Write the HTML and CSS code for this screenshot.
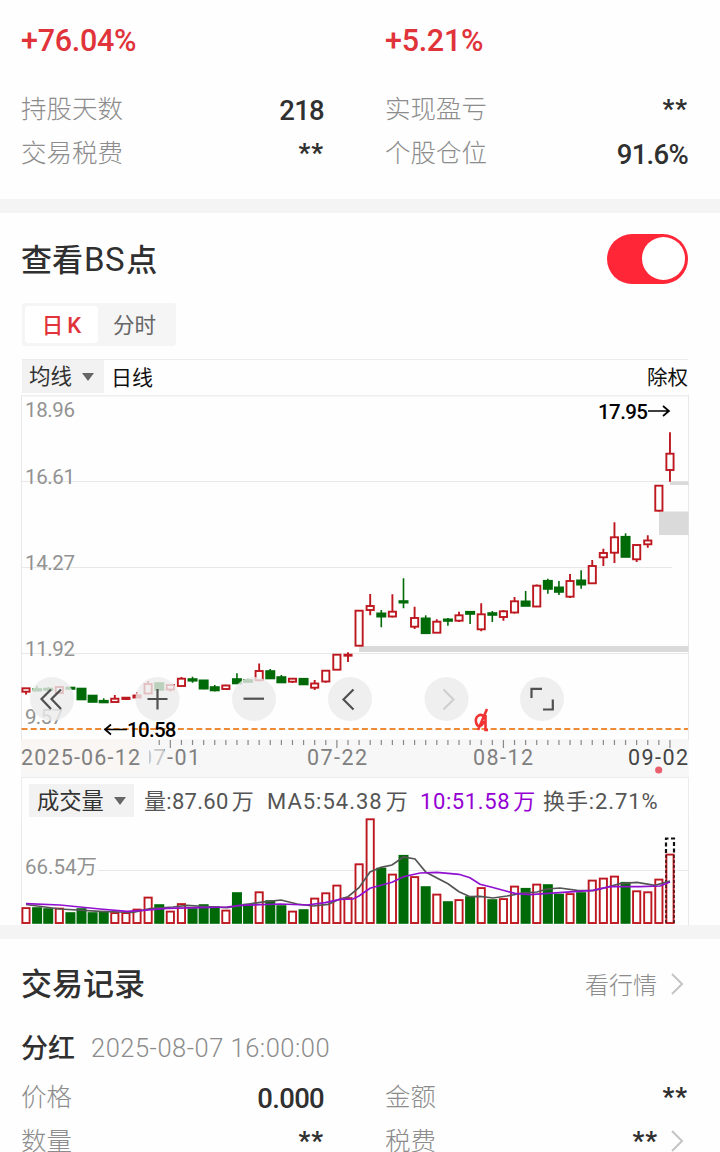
FILE: index.html
```html
<!DOCTYPE html>
<html lang="zh-CN">
  <head>
    <title>交易记录</title>
    <meta charset="utf-8" />
    <link rel="stylesheet" href="styles.css">
  </head>

  <body>
    <section class="summary">
      <div class="rate">+76.04%</div>
      <div class="rate">+5.21%</div>
      <div class="item"><span class="label">持股天数</span><b class="num">218</b></div>
      <div class="item"><span class="label">实现盈亏</span><b class="num stars">**</b></div>
      <div class="item"><span class="label">交易税费</span><b class="num stars">**</b></div>
      <div class="item"><span class="label">个股仓位</span><b class="num">91.6%</b></div>
    </section>

    <section class="chart">
      <div class="chart__head">
        <h2>查看<span>BS</span>点</h2>
        <div class="switch"><i></i></div>
      </div>

      <div class="tabs">
        <span class="tabs__item tabs__item--on">日<em>K</em></span>
        <span class="tabs__item">分时</span>
      </div>

      <div class="bar">
        <span class="select">均线<i class="arrow"></i></span>
        <span class="bar__period">日线</span>
        <span class="bar__right">除权</span>
      </div>

      <svg class="price" width="668" height="382" viewBox="21 395 668 382">
        <rect class="axis-band" x="21" y="739" width="668" height="38" />
        <rect class="axis-first" x="21" y="739" width="119" height="32" />
        <path class="grid" d="M21 395.8H689M22 481.5H688M22 567.5H672M22 653.5H688M21.5 395V740M688.5 395V740" />
        <path class="gap" d="M359 646H688.5V652H359zM659 511.500H688.500V535H659zM670 481.500H688.500V485H670z" />
        <g class="axis">
          <text x="25" y="416.500" textLength="50">18.96</text>
          <text x="25" y="484" textLength="50">16.61</text>
          <text x="25" y="570" textLength="50">14.27</text>
          <text x="25" y="656" textLength="50">11.92</text>
          <text x="25" y="724" textLength="38">9.57</text>
        </g>
        <path class="cost" d="M21.500 729H688" />
        <g id="candles"></g>
        <path id="ticks" class="ticks" />
        <g class="dates">
          <text x="140" y="764.500" textLength="60">07-01</text>
          <rect class="fade" x="140" y="746" width="9" height="22" />
          <rect class="fade fade--half" x="149" y="746" width="15" height="22" />
          <text x="21" y="764.500" textLength="119">2025-06-12</text>
          <text x="307" y="764.500" textLength="60">07-22</text>
          <text x="473" y="764.500" textLength="60">08-12</text>
          <text class="dates__now" x="628" y="764.500" textLength="60">09-02</text>
        </g>
        <circle class="dot" cx="658.700" cy="770" r="3.600" />

        <g class="marks">
          <text x="127" y="737" textLength="49.500">10.58</text>
          <path d="M127 729.500H105M111 724.500L105 729.500L111 734.500" />
          <text x="598" y="418.500" textLength="50">17.95</text>
          <path d="M648 411H669M663 406L669 411L663 416" />
        </g>

        <!-- dividend mark -->
        <path class="dividend" d="M485 717C480 712 475 717 476 722C477 728 482 727 484 721M485.500 715V730H488M487 709L478 730" />

        <g class="tools">
          <circle cx="52" cy="699" r="22" />
          <circle cx="157.500" cy="699" r="22" />
          <circle cx="254" cy="699" r="22" />
          <circle cx="350" cy="699" r="22" />
          <circle cx="446.500" cy="699" r="22" />
          <circle cx="542" cy="699" r="22" />
          <path d="M51 689.500L41.500 699L51 709M61 689.500L51.500 699L61 709" />
          <path d="M147.500 699H167.500M157.500 689V709.500" />
          <path d="M243.500 698.700H264" />
          <path d="M353.500 689.500L343.500 699.500L353.500 709.500" />
          <path class="tools__off" d="M443.500 689.500L453.500 699.500L443.500 709.500" />
          <path d="M531.500 698V688.800H542M543 709.500H552.800V699.500" />
        </g>
      </svg>

      <div class="legend">
        <span class="select select--vol">成交量<i class="arrow"></i></span>
        <span class="legend__vol">量:87.60<s></s>万</span>
        <span class="legend__ma5">MA5:54.38<s></s>万</span>
        <span class="legend__ma10">10:51.58<s></s>万</span>
        <span class="legend__turn">换手:2.71%</span>
      </div>
      <svg class="volume" width="668" height="107" viewBox="21 818 668 107">
        <path class="grid" d="M98 870.500H688" />
        <path class="grid" d="M21.500 818V925M688.500 818V925" />
        <text class="volume__label" x="25" y="873.500" textLength="72">66.54万</text>
        <g id="volumes"></g>
        <path class="est" d="M666 853V838.500H674V853" />
        <path class="est est--thin" d="M666 855V923M674 855V923" />
        <polyline class="ma5" points="26,904.500 60,909 100,911.300 133,912.500 150,908.700 173,907 187,905.300 213,907 227,907.700 240,905.700 260,902.300 281,900 297,904 313,906 328,904.300 340,899 348,896.700 359,887.700 370,872 381,867.300 392,865 403.500,857 415,859 426,872.300 448,883.700 459,891.700 470,896.700 480,896.300 493,898 507,896 523,893 537,892 547,889 560,888 577,890.300 593,890.700 607,887.300 620,883.700 637,882.300 655,885.300 670,881" />
        <polyline class="ma10" points="26,903.700 60,905 100,909 127,911.300 143,910.300 167,908.300 200,907.700 227,907 240,905.300 280,904 307,905 325,902.700 340,899.300 353,899 359,896 370,888.300 392,882.300 403.500,876.700 420,873 437,872.300 459,874.300 470,877.700 480,884.300 492,887.300 504,890.500 515,893.300 530,894.700 563,892.300 593,890.300 610,886.700 640,886.700 660,886 670,882" />
      </svg>
    </section>

    <section class="records">
      <div class="records__head">
        <h2>交易记录</h2>
        <span class="more">看行情<svg width="14" height="24" viewBox="0 0 14 24"><path d="M2 2L12 12L2 22" /></svg></span>
      </div>
      <div class="records__title"><b>分红</b><span>2025-08-07 16:00:00</span></div>
      <div class="records__grid">
        <div class="item"><span class="label">价格</span><b class="num">0.000</b></div>
        <div class="item"><span class="label">金额</span><b class="num stars">**</b></div>
        <div class="item"><span class="label">数量</span><b class="num stars">**</b></div>
        <div class="item"><span class="label">税费</span><b class="num stars stars--more">**</b><svg class="chevron" width="14" height="24" viewBox="0 0 14 24"><path d="M2 2L12 12L2 22" /></svg></div>
      </div>
    </section>

    <script>
      // up/down, body top, body bottom, high, low, top of the volume bar
      const days = [
        ["r", 688.3, 691.7, 688, 694.5, 907.5],
        ["g", 689, 690.7, 686, 690.7, 908],
        ["g", 688.5, 690, 687, 691, 909],
        ["r", 687, 693, 687, 693, 908],
        ["g", 687.5, 689, 687, 689, 913],
        ["g", 688.5, 699.5, 688, 700, 909],
        ["g", 695.5, 702, 695, 702, 913],
        ["g", 700.7, 702.5, 698.3, 702.5, 912.5],
        ["r", 698.7, 702, 695, 702, 912.5],
        ["r", 697.7, 699, 697, 700, 912.5],
        ["r", 695.5, 697.5, 692, 697.5, 909],
        ["r", 684, 693.5, 681, 693.5, 897],
        ["g", 683, 690, 683, 690, 905],
        ["r", 685, 689.5, 685, 691.5, 911],
        ["r", 678.7, 686, 677, 686, 903.5],
        ["g", 679, 680.8, 676.7, 682.7, 909],
        ["g", 680.3, 688.7, 680, 689.3, 905],
        ["g", 687, 690.5, 685, 691.5, 907],
        ["r", 685.5, 689, 684.7, 689.7, 910],
        ["g", 679, 683.5, 673.3, 684, 893],
        ["g", 680, 682, 678.5, 683, 904.5],
        ["r", 671, 680.3, 663.5, 680.3, 891.7],
        ["g", 671, 678.5, 669, 678.5, 901],
        ["g", 677, 682.5, 675, 683, 906],
        ["r", 678.7, 681.7, 678, 683, 911],
        ["g", 678.7, 684.5, 678.7, 685, 910],
        ["r", 683.5, 687.7, 680, 690, 898],
        ["r", 670.7, 681.5, 670.7, 682.7, 892.7],
        ["r", 654.7, 669.7, 654, 670, 885],
        ["r", 654.7, 655.7, 652.3, 662, 897.5],
        ["r", 610.7, 645.7, 610, 646, 863.7],
        ["r", 606, 610, 594, 615.3, 818.7],
        ["g", 613.3, 616.7, 610, 627.3, 868.5],
        ["r", 611.7, 616.5, 594.3, 617.5, 874],
        ["g", 601, 602.7, 578.3, 608.3, 855.7],
        ["r", 618, 626.7, 606.7, 629, 876.5],
        ["g", 618.3, 633.3, 615.3, 633.3, 887],
        ["r", 621.7, 632.7, 619.3, 633, 894],
        ["g", 619.3, 621, 618, 625.7, 902],
        ["r", 615.3, 620.7, 611.7, 622, 899.5],
        ["g", 611.7, 614, 611.7, 624, 897],
        ["r", 614.3, 629.3, 603.3, 631.3, 887.5],
        ["g", 613, 615, 611, 622, 900],
        ["r", 611.3, 617, 610, 620.7, 898.5],
        ["r", 601.3, 612.5, 597, 613.5, 886],
        ["g", 601.3, 606, 591, 606, 888.7],
        ["r", 585.7, 606.5, 584.5, 607, 884],
        ["g", 580.7, 589, 578.7, 593.7, 885],
        ["g", 587.3, 592, 581, 595, 894.5],
        ["r", 581, 596.7, 574, 598, 893.5],
        ["g", 580.3, 584.7, 570.3, 588.7, 893],
        ["r", 566, 583.3, 560, 583.5, 880],
        ["r", 553, 557.3, 548.7, 566, 878],
        ["r", 537.3, 552.7, 522.3, 563, 876],
        ["g", 536.7, 557, 533.3, 557, 882.7],
        ["r", 545, 559.3, 545, 562, 890.7],
        ["r", 540.5, 544.3, 535.3, 547.7, 891.7],
        ["r", 485.7, 510.7, 485, 511.5, 879],
        ["r", 453.7, 470, 432.3, 481.7, 854]
      ]
      const step = 11.103

      let candles = ""
      let volumes = ""
      let ticks = ""
      days.forEach(([c, top, bottom, high, low, vol], i) => {
        const x = 26 + i * step
        const inset = c === "r" ? 0.6 : 0
        const w = 9 - inset * 2
        candles += `<path class="${c}" d="M${x} ${high}V${top}M${x} ${bottom}V${low}" />`
        candles += `<rect class="${c}" x="${x - w / 2 + 0.3}" y="${top}" width="${w - 0.6}" height="${bottom - top}" />`
        volumes += `<rect class="${c}" x="${x - w / 2 + 0.3}" y="${vol + inset}" width="${w - 0.6}" height="${923 - vol - inset}" />`
        if (i > 11) {
          ticks += `M${x} 740V${i % 15 === 13 ? 748 : 745}`
        }
      })
      document.getElementById("candles").innerHTML = candles
      document.getElementById("volumes").innerHTML = volumes
      document.getElementById("ticks").setAttribute("d", ticks)
    </script>
  </body>
</html>
```
FILE: styles.css
```css
body {
  margin: 0;
  height: 1152px;
  overflow: hidden;
  background: #f4f4f4;
  color: #303030;
  font-family: Roboto, "Noto Sans CJK SC", sans-serif;
}

section {
  box-sizing: border-box;
  background: #fefefe;
  padding: 0 32px 0 22px;
}

h2 {
  margin: 0 0 0 -1px;
  padding-top: 1px;
  font-size: 31px;
  line-height: 50px;
  font-weight: 500;
}

h2 span {
  margin: 0 1px;
  font-size: 33px;
  font-weight: 400;
  letter-spacing: .5px;
}

.summary {
  display: grid;
  grid-template-columns: 302px 302px;
  grid-template-rows: 69px 44px 44px;
  column-gap: 62px;
  height: 199px;
  padding-top: 18px;
}

.rate {
  margin-left: -1px;
  color: #e0333a;
  font-size: 30.5px;
  line-height: 46px;
  font-weight: 500;
  letter-spacing: -.3px;
}

.item {
  display: flex;
  justify-content: space-between;
  height: 44px;
  line-height: 45px;
}

.label {
  margin-left: -1px;
  color: #8c8c8c;
  font-size: 25.5px;
  font-weight: 300;
}

.num {
  position: relative;
  top: 1px;
  font-size: 27.5px;
  font-weight: 500;
  letter-spacing: -.7px;
}

.stars {
  top: 0;
  font-size: 26px;
  font-weight: 700;
  letter-spacing: 1px;
}

.chart {
  height: 712px;
  margin-top: 14px;
  padding-top: 21px;
}

.chart__head, .records__head {
  display: flex;
  justify-content: space-between;
}

.chart__head {
  height: 50px;
}

.switch {
  box-sizing: border-box;
  width: 81px;
  height: 50px;
  padding: 3px;
  border-radius: 25px;
  background: #ff2638;
}

.switch i {
  display: block;
  width: 43px;
  height: 43px;
  margin-left: 32px;
  border-radius: 50%;
  background: #fff;
}

.tabs {
  display: flex;
  box-sizing: border-box;
  width: 154px;
  height: 43px;
  margin-top: 19px;
  padding: 3px;
  background: #f5f5f5;
  border-radius: 3px;
}

.tabs__item {
  width: 73px;
  line-height: 39px;
  font-size: 21.5px;
  text-align: center;
  color: #666;
}

.tabs__item--on {
  background: #fff;
  border-radius: 4px;
  color: #e0333a;
  font-weight: 500;
}

.tabs__item em {
  margin-left: 4px;
  font-size: 22px;
  font-style: normal;
}

.bar {
  display: flex;
  box-sizing: border-box;
  height: 36px;
  margin-top: 13px;
  border-top: 1px solid #ececec;
  font-size: 21px;
  line-height: 36px;
  color: #111;
}

.select {
  display: flex;
  align-items: center;
  box-sizing: border-box;
  width: 82px;
  height: 33px;
  padding: 1px 0 0 7px;
  background: #f2f2f2;
  color: #333;
  font-size: 21.5px;
}

.arrow {
  margin-left: 10px;
  border: 6px solid transparent;
  border-top: 8px solid #666;
  border-bottom: 0;
}

.bar__period {
  margin-left: 7px;
}

.bar__right {
  margin-left: auto;
  font-size: 20.5px;
}

.price, .volume {
  display: block;
  margin-left: -1px;
}

.grid {
  fill: none;
  stroke: #e8e8e8;
}

.axis-band {
  fill: #f7f7f8;
}

.axis-first {
  fill: #f9f6f4;
}

.gap {
  fill: #dadada;
}

.axis text, .volume__label {
  font-size: 20.5px;
  fill: #929292;
}

.cost {
  stroke: #ee8a35;
  stroke-width: 2;
  stroke-dasharray: 6 3.2;
}

.r {
  fill: #fff;
  stroke: #bd1820;
  stroke-width: 1.9;
}

.g {
  fill: #006a08;
  stroke: #006a08;
  stroke-width: 1.6;
}

.ticks {
  stroke: #888;
  stroke-width: 1.2;
}

.dates {
  font-size: 21.5px;
  fill: #808080;
}

.dates__now {
  fill: #444;
}

.fade {
  fill: #f7f7f8;
}

.fade--half {
  opacity: .6;
}

.dot {
  fill: #e8606d;
}

.marks {
  font-size: 20.5px;
  font-weight: 500;
}

.marks text {
  fill: #000;
}

.marks path {
  fill: none;
  stroke: #000;
  stroke-width: 1.7;
}

.dividend {
  fill: none;
  stroke: #f03434;
  stroke-width: 2.6;
}

.tools circle {
  fill: #ebebeb;
  opacity: .8;
}

.tools path {
  fill: none;
  stroke: #505050;
  stroke-width: 2.2;
}

.tools .tools__off {
  stroke: #cfcfcf;
}

.legend {
  display: flex;
  box-sizing: border-box;
  width: 668px;
  height: 41px;
  margin-left: -1px;
  padding: 6px 0 0 7px;
  border: 1px solid #ececec;
  border-bottom: 0;
  font-size: 22px;
  line-height: 36px;
  letter-spacing: .3px;
  color: #555;
  white-space: nowrap;
}

.legend s {
  margin-left: 3px;
}

.legend span {
  flex: none;
}

.legend .select--vol {
  width: 105px;
  padding-left: 8px;
  font-size: 22.3px;
  letter-spacing: 0;
}

.legend__vol {
  width: 123px;
  margin-left: 10px;
}

.legend__ma5 {
  width: 153px;
  letter-spacing: 1px;
}

.legend__ma10 {
  width: 122px;
  color: #9400d3;
  letter-spacing: .6px;
}

.legend__turn {
  margin-left: 1px;
  letter-spacing: .9px;
}

.est {
  fill: none;
  stroke: #111;
  stroke-width: 2.2;
  stroke-dasharray: 4 2.5;
}

.est--thin {
  stroke: #501418;
  stroke-width: 1.6;
  stroke-dasharray: 3 2;
}

.ma5, .ma10 {
  fill: none;
  stroke: #555;
  stroke-width: 1.7;
}

.ma10 {
  stroke: #9110d0;
}

.records {
  height: 213px;
  margin-top: 14px;
  padding-top: 20px;
}

.more {
  display: flex;
  align-items: center;
  gap: 13px;
  margin-top: -2px;
  padding-right: 4px;
  color: #8c8c8c;
  font-size: 24px;
  font-weight: 300;
}

.more path, .chevron path {
  fill: none;
  stroke: #c4c4c4;
  stroke-width: 2;
}

.records__title {
  display: flex;
  height: 44px;
  margin-top: 16px;
  line-height: 46px;
}

.records__title b {
  width: 69px;
  margin-left: -1px;
  padding-right: 1px;
  font-size: 27px;
  font-weight: 500;
}

.records__title span {
  color: #8c8c8c;
  font-size: 25.5px;
  line-height: 44px;
  font-weight: 300;
  letter-spacing: .5px;
}

.records__grid {
  display: grid;
  grid-template-columns: 302px 302px;
  column-gap: 62px;
  margin-top: 5px;
}

.stars--more {
  margin-left: auto;
}

.chevron {
  margin: 10px 4px 0 12px;
}
```
